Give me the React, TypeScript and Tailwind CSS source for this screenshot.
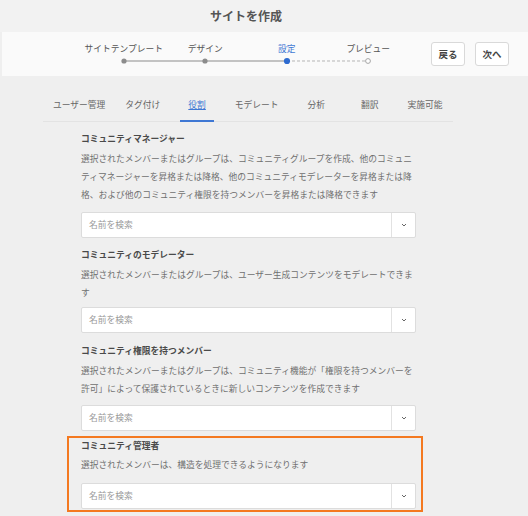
import React from 'react';

const steps = [
  { label: 'サイトテンプレート', active: false },
  { label: 'デザイン', active: false },
  { label: '設定', active: true },
  { label: 'プレビュー', active: false },
];

const tabs = [
  { label: 'ユーザー管理', cls: 'ml-[2px]' },
  { label: 'タグ付け', cls: 'ml-[4px]' },
  { label: '役割', cls: 'ml-[12px]', active: true },
  { label: 'モデレート', cls: 'ml-[13px]' },
  { label: '分析', cls: 'ml-[13px]' },
  { label: '翻訳', cls: 'ml-[20px]' },
  { label: '実施可能', cls: 'ml-[13px]' },
];

const Chevron = () => (
  <svg width="6" height="4" viewBox="0 0 6 4" className="block">
    <path d="M1 1 L3 3 L5 1" fill="none" stroke="#666" strokeWidth="1" />
  </svg>
);

const SearchBox = ({ className }: { className: string }) => (
  <div className={`flex h-[26px] rounded-[2px] border border-[#dcdcdc] bg-white ${className}`}>
    <div className="flex-1 flex items-center pl-[7px] text-[8.75px] text-[#9a9a9a]">名前を検索</div>
    <div className="w-[24px] flex items-center justify-center border-l border-[#e2e2e2]">
      <Chevron />
    </div>
  </div>
);

type SectionProps = {
  title: string;
  lines: string[];
  wrap: string;
  titleCls?: string;
  inputCls: string;
};

const Section = ({ title, lines, wrap, titleCls = 'leading-[18px]', inputCls }: SectionProps) => (
  <div className={wrap}>
    <div className={`text-[8.75px] font-bold text-[#4a4a4a] ${titleCls}`}>{title}</div>
    <div className="mt-[2px] text-[8.75px] leading-[18px] text-[#707070]">
      {lines.map((l, i) => (
        <div key={i} className="whitespace-nowrap">{l}</div>
      ))}
    </div>
    <SearchBox className={inputCls} />
  </div>
);

export default function App() {
  return (
    <div className="w-[528px] h-[516px] overflow-hidden bg-[#efefef] font-['Noto_Sans_CJK_JP','Noto_Sans',sans-serif]">
      {/* top title */}
      <div className="h-[32px] bg-[#f2f2f2] flex items-center justify-center">
        <span className="text-[12px] font-bold text-[#555] leading-none -ml-[36px]">サイトを作成</span>
      </div>

      {/* stepper band */}
      <div className="ml-[2px] h-[44px] bg-[#fafafa] flex items-start">
        <div className="ml-[81px] mt-[11px] flex flex-col">
          <div className="flex">
            {steps.map((s) => (
              <div
                key={s.label}
                className={`w-[81.5px] text-center text-[8.75px] leading-[12px] whitespace-nowrap ${s.active ? 'text-[#3f78d4]' : 'text-[#555]'}`}
              >
                {s.label}
              </div>
            ))}
          </div>
          <svg width="326" height="8" viewBox="0 0 326 8" className="mt-[2px] block">
            <line x1="41" y1="4" x2="204" y2="4" stroke="#8c8c8c" strokeWidth="1" />
            <line x1="204" y1="4" x2="285" y2="4" stroke="#b5b5b5" strokeWidth="1" strokeDasharray="3 2" />
            <circle cx="41" cy="4" r="2.6" fill="#8c8c8c" />
            <circle cx="122" cy="4" r="2.6" fill="#8c8c8c" />
            <circle cx="204" cy="4" r="3.1" fill="#2e6bd0" />
            <circle cx="285" cy="4" r="2.4" fill="#fff" stroke="#a5a5a5" strokeWidth="1" />
          </svg>
        </div>
        <div className="ml-auto mr-[19px] mt-[10px] flex gap-[10px]">
          <button className="w-[34px] h-[24px] rounded-[3px] border border-[#d9d9d9] bg-white text-[9.5px] font-bold text-[#444]">
            戻る
          </button>
          <button className="w-[34px] h-[24px] rounded-[3px] border border-[#d9d9d9] bg-white text-[9.5px] font-bold text-[#444]">
            次へ
          </button>
        </div>
      </div>

      {/* tabs */}
      <div className="ml-[43px] w-[410px] mt-[22px] flex border-b border-[#e3e3e3]">
        {tabs.map((t) => (
          <div
            key={t.label}
            className={`${t.cls} px-[8px] pb-[8px] -mb-px text-[8.75px] leading-[14px] whitespace-nowrap border-b-2 ${
              t.active ? 'border-[#3f78d4] text-[#3f78d4] underline' : 'border-transparent text-[#666]'
            }`}
          >
            {t.label}
          </div>
        ))}
      </div>

      {/* role sections */}
      <div className="ml-[81px] w-[335px] flex flex-col">
        <Section
          wrap="mt-[8px]"
          title="コミュニティマネージャー"
          lines={[
            '選択されたメンバーまたはグループは、コミュニティグループを作成、他のコミュニ',
            'ティマネージャーを昇格または降格、他のコミュニティモデレーターを昇格または降',
            '格、および他のコミュニティ権限を持つメンバーを昇格または降格できます',
          ]}
          inputCls="mt-[8px]"
        />
        <Section
          wrap="mt-[8px]"
          title="コミュニティのモデレーター"
          lines={['選択されたメンバーまたはグループは、ユーザー生成コンテンツをモデレートできま', 'す']}
          inputCls="mt-[5px]"
        />
        <Section
          wrap="mt-[9px]"
          title="コミュニティ権限を持つメンバー"
          lines={[
            '選択されたメンバーまたはグループは、コミュニティ機能が「権限を持つメンバーを',
            '許可」によって保護されているときに新しいコンテンツを作成できます',
          ]}
          inputCls="mt-[7px]"
        />
        <Section
          wrap="mt-[5px] -ml-[14px] -mr-[7px] pl-[12px] pr-[5px] pb-px border-2 border-[#f47920]"
          titleCls="leading-[16px]"
          title="コミュニティ管理者"
          lines={['選択されたメンバーは、構造を処理できるようになります']}
          inputCls="mt-[9px]"
        />
      </div>
    </div>
  );
}
